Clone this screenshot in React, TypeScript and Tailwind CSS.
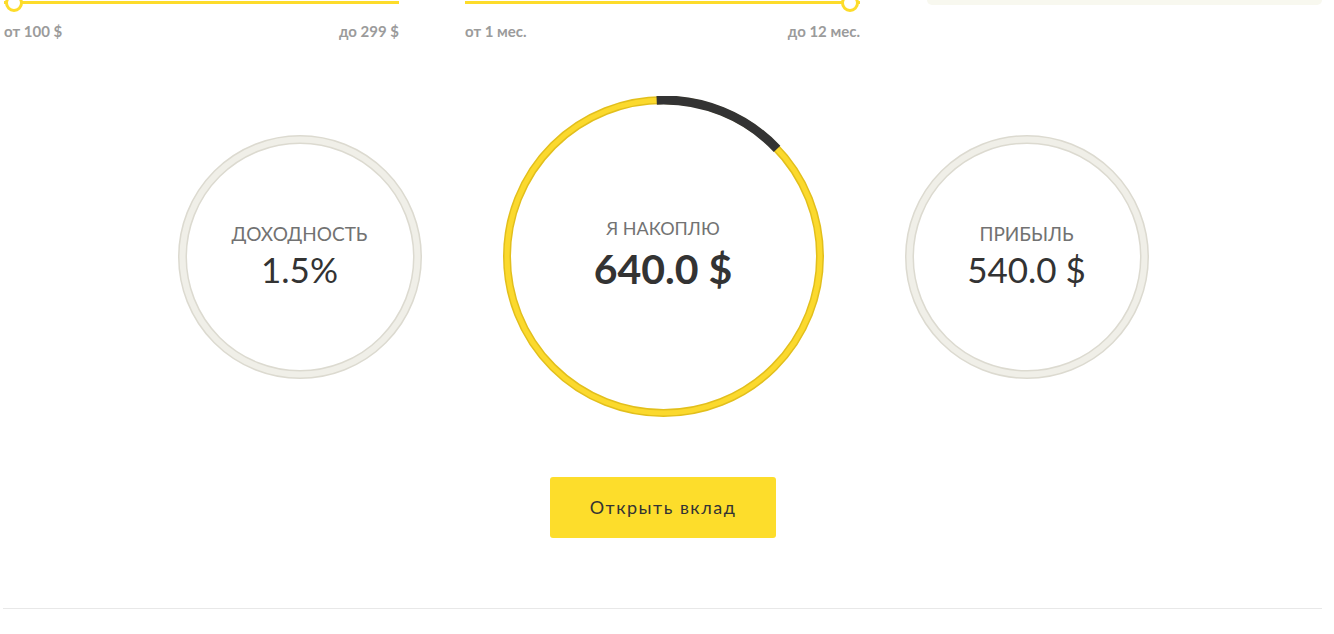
import type { ReactNode } from "react";

const font = { fontFamily: "Lato, 'Noto Sans', 'Open Sans', sans-serif" };

const Slider = ({ from, to, value }: { from: string; to: string; value: number }) => (
	<div className="w-[395px]">
		<div className="relative h-[6px] -mt-[4px]">
			<div className="absolute left-0 right-0 top-[5px] h-[3px] bg-[#fddc2a]" />
			<div
				className="absolute top-[-2px] w-[18px] h-[18px] rounded-full bg-white border-[3px] border-[#fddc2a]"
				style={{ left: 1 + value * (395 - 2 - 18) }}
			/>
		</div>
		<div className="flex justify-between mt-[19px] text-[15px] font-bold text-[#9b9b9b] leading-[20px]">
			<span>{from}</span>
			<span>{to}</span>
		</div>
	</div>
);

const Ring = ({
	size,
	stroke,
	color,
	edge,
	children,
	arc,
}: {
	size: number;
	stroke: number;
	color: string;
	edge: string;
	children: ReactNode;
	arc?: [number, number];
}) => {
	const r = size / 2 - stroke / 2;
	const c = size / 2;
	const circ = 2 * Math.PI * r;
	return (
		<div className="relative flex items-center justify-center" style={{ width: size, height: size }}>
			<svg width={size} height={size} className="absolute inset-0">
				<circle cx={c} cy={c} r={r} fill="none" stroke={edge} strokeWidth={stroke} />
				<circle cx={c} cy={c} r={r} fill="none" stroke={color} strokeWidth={stroke - 3} />
				{arc && (
					<circle
						cx={c}
						cy={c}
						r={r}
						fill="none"
						stroke="#333333"
						strokeWidth={stroke + 1}
						strokeDasharray={`${((arc[1] - arc[0]) / 360) * circ} ${circ}`}
						transform={`rotate(${arc[0] - 90} ${c} ${c})`}
					/>
				)}
			</svg>
			<div className="relative flex flex-col items-center">{children}</div>
		</div>
	);
};

export default function App() {
	return (
		<div className="w-[1334px] h-[634px] bg-white overflow-hidden" style={font}>
			<div className="w-[1326px]">
				{/* top controls */}
				<div className="flex gap-[66px] pl-[4px]">
					<Slider from="от 100 $" to="до 299 $" value={0} />
					<Slider from="от 1 мес." to="до 12 мес." value={1} />
					<div className="w-[395px] h-[5px] bg-[#f8f8ef] rounded-b-[6px] ml-[1px]" />
				</div>

				{/* result circles */}
				<div className="flex justify-center items-center gap-[81px] mt-[55px]">
					<Ring size={244} stroke={9} color="#f0efe8" edge="#dcdad0">
						<div className="text-[19px] text-[#727272] leading-[24px] mt-[-3px]">ДОХОДНОСТЬ</div>
						<div className="text-[35px] text-[#333] leading-[40px] mt-[3px]">1.5%</div>
					</Ring>
					<Ring size={321} stroke={8} color="#fbd92d" edge="#e2bf1c" arc={[-2.5, 46.5]}>
						<div className="text-[18px] text-[#727272] leading-[22px] mt-[-4px]">Я НАКОПЛЮ</div>
						<div className="text-[41px] text-[#333] font-bold leading-[46px] mt-[7px]">640.0 $</div>
					</Ring>
					<Ring size={244} stroke={9} color="#f0efe8" edge="#dcdad0">
						<div className="text-[19px] text-[#727272] leading-[24px] mt-[-3px]">ПРИБЫЛЬ</div>
						<div className="text-[35px] text-[#333] leading-[40px] mt-[3px]">540.0 $</div>
					</Ring>
				</div>

				{/* action */}
				<div className="flex justify-center mt-[60px]">
					<button className="w-[226px] h-[61px] bg-[#fddd2b] rounded-[3px] text-[18px] text-[#333] tracking-[1.5px]">
						Открыть вклад
					</button>
				</div>

				<div className="mt-[70px] ml-[3px] mr-[4px] h-px bg-[#e8e8e8]" />
			</div>
		</div>
	);
}
